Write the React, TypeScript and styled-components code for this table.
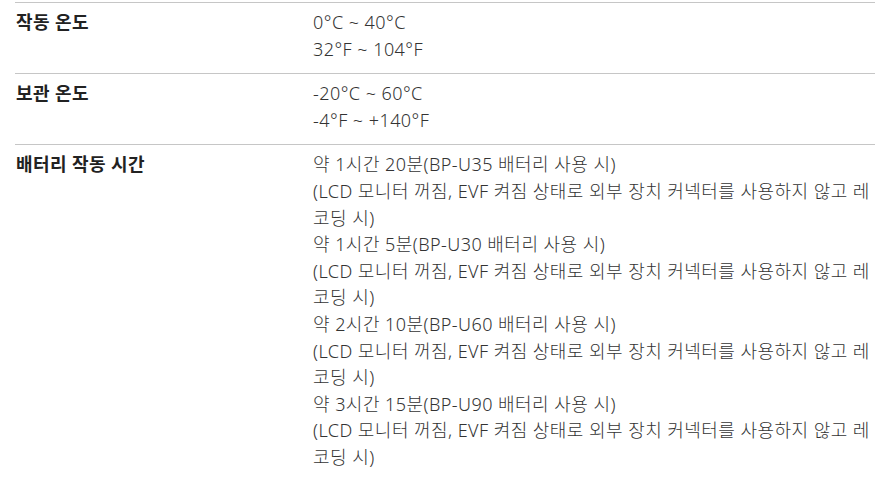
import React from 'react';
import styled, { createGlobalStyle } from 'styled-components';

const GlobalStyle = createGlobalStyle`
    html, body {
        margin: 0;
        padding: 0;
        background: #fff;
    }

    body {
        font-family: "Noto Sans", "Noto Sans CJK KR", sans-serif;
        color: #333;
    }
`;

const Page = styled.div`
    padding: 2px 18px 0 15px;
`;

const SpecList = styled.dl`
    margin: 0;
`;

const Row = styled.div`
    display: grid;
    grid-template-columns: 298px 1fr;
    border-top: 1px solid #c6c6c6;
    padding: 6px 0 11px;
`;

const Label = styled.dt`
    margin: 0;
    padding-left: 1px;
    font-size: 18px;
    font-weight: 700;
    line-height: 26.6px;
    letter-spacing: 0.4px;
    color: #222;
`;

const Value = styled.dd`
    margin: 0;
    font-size: 18px;
    font-weight: 300;
    line-height: 26.6px;
    letter-spacing: 0.45px;
    color: #333;
`;

const Line = styled.div``;

const note = '(LCD 모니터 꺼짐, EVF 켜짐 상태로 외부 장치 커넥터를 사용하지 않고 레코딩 시)';

const specs = [
    {
        label: '작동 온도',
        lines: ['0°C ~ 40°C', '32°F ~ 104°F']
    },
    {
        label: '보관 온도',
        lines: ['-20°C ~ 60°C', '-4°F ~ +140°F']
    },
    {
        label: '배터리 작동 시간',
        lines: [
            '약 1시간 20분(BP-U35 배터리 사용 시)',
            note,
            '약 1시간 5분(BP-U30 배터리 사용 시)',
            note,
            '약 2시간 10분(BP-U60 배터리 사용 시)',
            note,
            '약 3시간 15분(BP-U90 배터리 사용 시)',
            note
        ]
    }
];

export default function App() {
    return (
        <Page>
            <GlobalStyle />
            <SpecList>
                {specs.map((s, index) => (
                    <Row key={index}>
                        <Label>{s.label}</Label>
                        <Value>
                            {s.lines.map((line, i) => (
                                <Line key={i}>{line}</Line>
                            ))}
                        </Value>
                    </Row>
                ))}
            </SpecList>
        </Page>
    );
}
